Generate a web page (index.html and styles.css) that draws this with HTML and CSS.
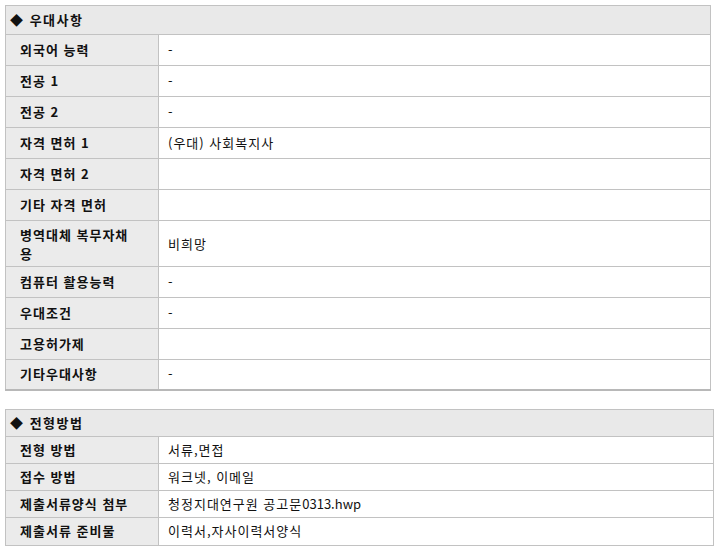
FILE: index.html
```html
<!DOCTYPE html>
<html lang="ko">
<head>
<meta charset="utf-8">
<link rel="stylesheet" href="styles.css">
</head>
<body>
<table class="info info-first">
  <colgroup><col class="col-label"><col></colgroup>
  <tr class="head"><th class="title" colspan="2">◆ 우대사항</th></tr>
  <tr><th>외국어 능력</th><td>-</td></tr>
  <tr><th>전공 1</th><td>-</td></tr>
  <tr><th>전공 2</th><td>-</td></tr>
  <tr><th>자격 면허 1</th><td>(우대) 사회복지사</td></tr>
  <tr><th>자격 면허 2</th><td></td></tr>
  <tr><th>기타 자격 면허</th><td></td></tr>
  <tr class="tall"><th>병역대체 복무자채용</th><td>비희망</td></tr>
  <tr><th>컴퓨터 활용능력</th><td>-</td></tr>
  <tr><th>우대조건</th><td>-</td></tr>
  <tr><th>고용허가제</th><td></td></tr>
  <tr class="last"><th>기타우대사항</th><td>-</td></tr>
</table>
<table class="info info-second">
  <colgroup><col class="col-label"><col></colgroup>
  <tr class="head"><th class="title" colspan="2">◆ 전형방법</th></tr>
  <tr><th>전형 방법</th><td>서류,면접</td></tr>
  <tr><th>접수 방법</th><td>워크넷, 이메일</td></tr>
  <tr><th>제출서류양식 첨부</th><td>청정지대연구원 공고문<span class="latin">0313.hwp</span></td></tr>
  <tr class="last"><th>제출서류 준비물</th><td>이력서,자사이력서양식</td></tr>
</table>
</body>
</html>
```
FILE: styles.css
```css
html, body {
  margin: 0;
  padding: 0;
  background: #ffffff;
}
body {
  padding: 5px 0 0 5px;
  font-family: "Noto Sans CJK KR", "Noto Sans", sans-serif;
  font-size: 13px;
  letter-spacing: 1px;
  color: #111111;
}
.latin {
  letter-spacing: 0;
}
.info {
  border-collapse: collapse;
  table-layout: fixed;
}
.col-label {
  width: 153px;
}
.info th, .info td {
  border: 1px solid #c2c2c2;
  vertical-align: middle;
  text-align: left;
  padding: 0;
  line-height: 16px;
}
.info th {
  padding: 0 18px 0 14px;
  background: #ebebeb;
  font-weight: bold;
}
.info td {
  padding: 0 9px;
  background: #ffffff;
}
.info th.title {
  padding: 0 0 0 4px;
  background: #e9e9e9;
  letter-spacing: 1.5px;
}
.info-first {
  width: 706px;
}
.info-first tr {
  height: 31px;
}
.info-first tr.head {
  height: 29px;
}
.info-first tr.tall {
  height: 46px;
}
.info-first tr.tall th {
  line-height: 19px;
}
.info-first tr.last {
  height: 30px;
}
.info-first tr.last th,
.info-first tr.last td {
  border-bottom: 2px solid #b8b8b8;
}
.info-second {
  width: 709px;
  margin-top: 18px;
}
.info-second tr {
  height: 27px;
}
.info-second tr.head {
  height: 27px;
}
.info-second tr.last {
  height: 28px;
}
```
